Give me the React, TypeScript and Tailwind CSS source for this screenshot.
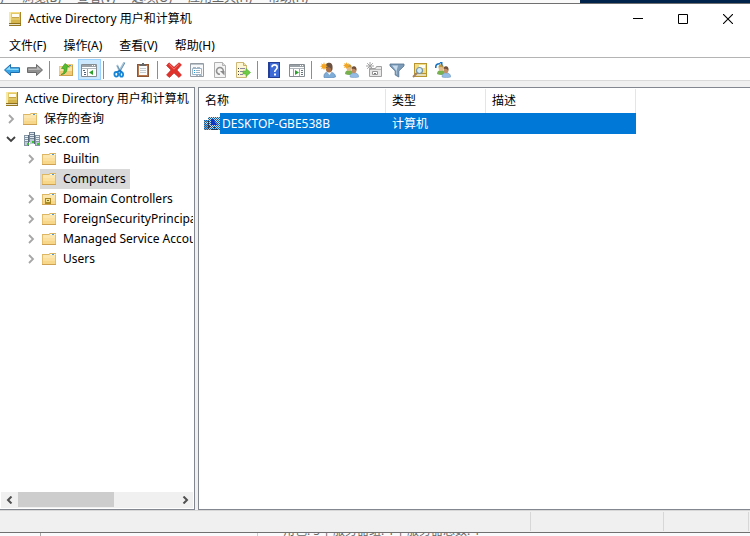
import React, { useState } from 'react';
import clsx from 'clsx';

type IconProps = { className?: string };

function Icon({ className, children }: IconProps & { children: React.ReactNode }) {
  return (
    <svg viewBox="0 0 16 16" aria-hidden="true" className={clsx('h-4 w-4 shrink-0', className)}>
      {children}
    </svg>
  );
}

const ConsoleIcon = ({ className }: IconProps) => (
  <Icon className={className}>
    <path d="M2 1h12v12H2z" fill="#e3c868" />
    <path d="M2 1h2v12H2z" fill="#f6e9a6" />
    <path d="M4 1h9v1H4z" fill="#f3dc85" />
    <path d="M4 9h9v3H4z" fill="#d6b64c" />
    <path d="M13 1h1v14h-1z" fill="#a98526" />
    <path d="M2 12h12v1H2z" fill="#8d6f1c" />
    <path d="M2 13h11v1H2z" fill="#e9e2c4" />
    <path d="M2 14h12v1H2z" fill="#94741d" />
    <path d="M5 3h7v3H5z" fill="#fffdf2" />
    <path d="M5 6h7v1H5z" fill="#c4a54c" />
  </Icon>
);

const FolderIcon = ({ className, badge }: IconProps & { badge?: boolean }) => (
  <Icon className={className}>
    <path d="M1 3h7l1-1h6v12H1z" fill="#f7d78a" />
    <path d="M1 3h7l1-1h6v1H9L8 4H1z" fill="#ddb664" />
    <path d="M2 4h12v3H2z" fill="#fbe6b0" />
    <path d="M2 7h12v3H2z" fill="#fadf9e" />
    <path d="M9 3h5v1H9z" fill="#fff8e2" />
    <path d="M11 3h2v1h-2z" fill="#4d9ad4" />
    <path d="M14 4h1v10h-1zM1 4h1v10H1z" fill="#e3bd6c" />
    <path d="M1 13h14v1H1z" fill="#cfa152" />
    {badge && (
      <>
        <path d="M4 7h6v6H4z" fill="#a98a22" />
        <path d="M5 8h4v3H5z" fill="#f1e08c" />
        <path d="M6 9h2v1H6z" fill="#7a6a30" />
      </>
    )}
  </Icon>
);

const DomainIcon = ({ className }: IconProps) => (
  <Icon className={className}>
    <path d="M5 1h6v10H5z" fill="#76889a" />
    <path d="M0 4h5v11H0zM11 4h5v11h-5z" fill="#8696a4" />
    <path d="M6 2h4v1H6zM6 4h4v1H6zM6 6h4v1H6z" fill="#dfe8ee" />
    <path d="M1 5h3v1H1zM1 7h3v1H1zM1 9h3v1H1zM12 5h3v1h-3zM12 7h3v1h-3zM12 9h3v1h-3z" fill="#e9f0f4" />
    <path d="M1 11h4v3H1zM6 8h4v5H6zM12 11h3v3h-3z" fill="#bccad4" />
    <path d="M4 4h1v11H4zM10 1h1v12h-1z" fill="#56697a" />
    <path d="M3 12h2v2H3zM8 10h2v2H8zM13 12h2v2h-2z" fill="#39c52f" />
  </Icon>
);

// Selected list icons are drawn with a checkered highlight over the glyph
const SelectedComputerIcon = ({ className }: IconProps) => (
  <Icon className={className}>
    <defs>
      <pattern id="dither" width="2" height="2" patternUnits="userSpaceOnUse">
        <path d="M0 0h1v1H0zM1 1h1v1H1z" fill="#0a62b4" shapeRendering="crispEdges" />
      </pattern>
    </defs>
    <path d="M4 1h12v11H4z" fill="#d5d8da" />
    <path d="M0 4h5v10H0z" fill="#8f979e" />
    <path d="M1 6h3v2H1z" fill="#dfe3e6" />
    <path d="M4 12h12v2H4z" fill="#b9c0c6" />
    <path d="M0 4h5v10H0zM4 1h12v13H4z" fill="url(#dither)" />
    <path d="M7 3h3l1 3 3 3H7z" fill="#1236c4" />
    <path d="M5 10h2v1H5zM9 11h3v1H9zM7 13h7v1H7zM4 5h1v8H4z" fill="#263a56" />
  </Icon>
);

const BackIcon = () => (
  <Icon>
    <path d="M.5 8l6-5.500v3.200h9v4.800h-9v3z" fill="#3aa5e6" stroke="#1c6fae" />
    <path d="M2 7.800l4-3.500v2.400h8.500v1.200z" fill="#8fdcfb" />
  </Icon>
);

const ForwardIcon = () => (
  <Icon>
    <path d="M15.500 8l-6-5.500v3.200h-9v4.800h9v3z" fill="#8f8f8f" stroke="#6b6b6b" />
    <path d="M14 7.800l-4-3.500v2.400H1.500v1.200z" fill="#bdbdbd" />
  </Icon>
);

const UpIcon = () => (
  <Icon>
    <path d="M1 4h6l1-2h7v12H1z" fill="#f2cb78" />
    <path d="M2 5h12v4H2z" fill="#fae4a8" />
    <path d="M1 13h14v1H1zM14 3h1v11h-1z" fill="#cda04a" />
    <path d="M11 3h2v1h-2z" fill="#4d9ad4" />
    <path d="M3 12.500c2.600-.5 3.500-3 3-6H3.500L7 1.500 11.500 5H9c.6 4-1.500 7.500-6 7.500z" fill="#55bd2f" stroke="#2f8c1c" strokeWidth=".6" />
  </Icon>
);

const TreePaneIcon = ({ flipped }: { flipped?: boolean }) => (
  <Icon>
    <path d="M.5 2.500h15v12H.5z" fill="#fff" stroke="#858c92" />
    <path d="M1 3h14v2H1z" fill="#9aa2a8" />
    <path d="M11 3h1v1h-1zM13 3h1v1h-1z" fill="#fff" />
    <path d="M1 6h14v1H1z" fill="#aeb6bc" />
    {flipped ? (
      <>
        <path d="M4.500 7v7M10.500 7v7" stroke="#a0a8ae" />
        <path d="M6 8l4 2.500L6 13z" fill="#2ba32b" />
        <path d="M12 8h2v1h-2zM12 10h2v1h-2zM12 12h2v1h-2z" fill="#68747e" />
      </>
    ) : (
      <>
        <path d="M6.500 7v7" stroke="#a0a8ae" />
        <path d="M2 8h2v1H2zM3 10h2v1H3zM3 12h2v1H3z" fill="#526578" />
        <path d="M12 8v5l-4-2.500z" fill="#2ba32b" />
      </>
    )}
  </Icon>
);

const CutIcon = () => (
  <Icon>
    <path d="M12.500 0L7 9.500M5 3l3 7" stroke="#a9c5d8" strokeWidth="2" />
    <path d="M12.800 1L8 9.500M5.500 4l2.500 5" stroke="#5282a6" strokeWidth=".8" />
    <path d="M5 10l3-1.500 2 2" stroke="#1674c4" strokeWidth="1.800" fill="none" />
    <ellipse cx="4.300" cy="12.300" rx="1.900" ry="2.300" fill="none" stroke="#1785d6" strokeWidth="1.800" />
    <ellipse cx="9.500" cy="12.500" rx="1.600" ry="2.200" fill="none" stroke="#1785d6" strokeWidth="1.800" />
  </Icon>
);

const ClipboardIcon = () => (
  <Icon>
    <path d="M2 2h12v13H2z" fill="#8f5636" />
    <path d="M3 3h10v11H3z" fill="#b9774d" />
    <path d="M4 4h8v9H4z" fill="#fcfcfc" />
    <path d="M5 6.500h6M5 8.500h6M5 10.500h6" stroke="#c3cad0" />
    <path d="M5 2h2V1h2v1h2v2H5z" fill="#686868" />
  </Icon>
);

const DeleteIcon = () => (
  <Icon>
    <path d="M3 .8l5 4.500L13 .8l2.500 2L11 8l4.500 5-2.500 2.500L8 11l-4.500 4.500L.5 13l4.500-5L.5 3.500z" fill="#e0322c" stroke="#c4241f" strokeWidth=".6" />
    <path d="M3 2.200l5 5 5-5" stroke="#f77670" fill="none" />
  </Icon>
);

const PropertiesIcon = () => (
  <Icon>
    <path d="M1.500 1.500h13v13h-13z" fill="#f6f8fa" stroke="#949ba2" />
    <path d="M2 2h12v1H2z" fill="#bdc5cc" />
    <path d="M3.500 6.500h9v6h-9z" fill="#fff" stroke="#9bb4c7" />
    <path d="M4 5h3v1H4zM8 5h3v1H8z" fill="#aab7c2" />
    <path d="M5 8h1v1H5zM5 10h1v1H5z" fill="#1a96dc" />
    <path d="M7 8.500h4M7 10.500h4" stroke="#9db1c0" />
    <path d="M7 13h2v1H7zM10 13h3v1h-3z" fill="#abb7c1" />
  </Icon>
);

const RefreshIcon = () => (
  <Icon>
    <path d="M2.500.5h8l3 3v12h-11z" fill="#f5f5f5" stroke="#b0b0b0" />
    <path d="M10.500.5v3h3" fill="#ddd" stroke="#b3b3b3" />
    <path d="M8 12.300a3.400 3.400 0 1 1 3.300-3.300" fill="none" stroke="#929292" strokeWidth="1.600" />
    <path d="M8 9h4.500v4.500z" fill="#8a8a8a" />
  </Icon>
);

const ExportIcon = () => (
  <Icon>
    <path d="M1.500.5h7l3 3v12h-10z" fill="#fdf6d5" stroke="#cdb878" />
    <path d="M8.500.5v3h3" fill="#f3e2a8" stroke="#c6ad68" />
    <path d="M3 6h1v1H3zM3 9h1v1H3zM3 12h1v1H3z" fill="#444" />
    <path d="M5 6.500h5M5 9.500h3M5 12.500h3" stroke="#8c86a0" />
    <path d="M8 9h3V6.500l4.500 4-4.500 4V12H8z" fill="#6ecb45" stroke="#4fae30" strokeWidth=".6" />
  </Icon>
);

const HelpIcon = () => (
  <Icon>
    <path d="M2 0h12v16H2z" fill="#263f92" />
    <path d="M4 1h9v14H4z" fill="#3f6bd6" />
    <path d="M6 5.300c0-3.200 5.200-3.200 5.200 0 0 2.200-2.500 2.200-2.500 4.700" fill="none" stroke="#fff" strokeWidth="1.600" />
    <path d="M8 11.500h2v2H8z" fill="#fff" />
  </Icon>
);

const Spark = () => (
  <path d="M4 0l.8 2.400L7 1.200 5.900 3.300 8 4.200 5.900 5l1 2.200-2.100-1L4 8.300l-.8-2.100-2.200 1L2.100 5 0 4.200l2.100-.9L1 1.200l2.200 1.200z" fill="#f5a623" />
);

const NewUserIcon = () => (
  <Icon>
    <path d="M4 15.500c-.5-4 1.500-5.500 5-5.500s6.500 1.500 6.500 5c-3 1-8 1.500-11.500.5z" fill="#7fadd8" stroke="#527fae" strokeWidth=".6" />
    <path d="M7 10l2.500 3 2-3z" fill="#fff" />
    <ellipse cx="9" cy="6" rx="3.200" ry="4.500" fill="#a9714a" />
    <path d="M5.500 6C5 1 8 .5 9.500.7 12.500 1 13 4 12.300 8l-1 1C11.500 5 9 4.500 5.500 6z" fill="#6b5140" />
    <Spark />
  </Icon>
);

const People = () => (
  <>
    <path d="M2 12c0-3 2-4 4-4s4 1 4 4.500c-3 .8-6 .5-8-.5z" fill="#78b04f" />
    <ellipse cx="6" cy="6" rx="2.400" ry="3" fill="#e0bb8c" />
    <path d="M3.500 5.500C3.500 2.500 5 2 6.500 2.200c2 .3 2.500 2 2 4.300C8 5 6 4.500 3.500 5.500z" fill="#c49a3d" />
    <path d="M7 15c0-3 1.500-4.200 4-4.200s4.700 1.200 4.700 4.200c-3 .8-6 .8-8.700 0z" fill="#95bce4" stroke="#6a95bf" strokeWidth=".5" />
    <ellipse cx="11" cy="8" rx="2.400" ry="3.200" fill="#c28e67" />
    <path d="M8.700 7C8.700 4.500 10 4 11.300 4.200c2 .2 2.400 2 2 4.500C12.500 7 11 6.300 8.700 7z" fill="#70503a" />
  </>
);

const NewGroupIcon = () => (
  <Icon>
    <People />
    <g transform="scale(.85)">
      <Spark />
    </g>
  </Icon>
);

const NewUnitIcon = () => (
  <Icon>
    <path d="M3.500 6.500h6l1-2h5v10h-12z" fill="#e8e8e8" stroke="#a0a0a0" />
    <path d="M4 7h11v1H4z" fill="#b5b5b5" />
    <path d="M6.500 9.500h5v3h-5z" fill="#fff" stroke="#959595" />
    <path d="M8 11h2v1H8z" fill="#777" />
    <path d="M4 0v8M0 4h8M1.200 1.200l5.600 5.600M6.800 1.200L1.200 6.800" stroke="#a2a2a2" />
  </Icon>
);

const FilterIcon = () => (
  <Icon>
    <path d="M1 2h14v2L9.800 9v6L6.200 13V9L1 4z" fill="#7c9cba" stroke="#54728e" strokeWidth=".8" />
    <path d="M3 3.500h6L7.500 9v3.500L7 12V8.500z" fill="#c9dced" />
  </Icon>
);

const FindIcon = () => (
  <Icon>
    <path d="M2 1h13v14H2z" fill="#b8952f" />
    <path d="M3 2h11v9H3z" fill="#f2dc83" />
    <path d="M3 12h11v2H3z" fill="#e5dcb6" />
    <path d="M7 3h6v3H7z" fill="#fffdee" />
    <path d="M1 15l4-4" stroke="#a4825d" strokeWidth="2" />
    <circle cx="7.500" cy="8.500" r="3" fill="#d5eefb" stroke="#7793a6" strokeWidth="1.200" />
  </Icon>
);

const AddToGroupIcon = () => (
  <Icon>
    <People />
    <path d="M.8 6C.5 3 2 1.500 5 1.700" fill="none" stroke="#1774c5" strokeWidth="1.600" />
    <path d="M4.500 0h3v4.500z" fill="#1774c5" />
  </Icon>
);

const toolGroups = [
  [
    { label: '后退', icon: <BackIcon /> },
    { label: '前进', icon: <ForwardIcon /> },
  ],
  [
    { label: '上移一级', icon: <UpIcon /> },
    { label: '显示/隐藏控制台树', icon: <TreePaneIcon />, pressed: true },
  ],
  [
    { label: '剪切', icon: <CutIcon /> },
    { label: '粘贴', icon: <ClipboardIcon /> },
  ],
  [
    { label: '删除', icon: <DeleteIcon /> },
    { label: '属性', icon: <PropertiesIcon /> },
    { label: '刷新', icon: <RefreshIcon /> },
    { label: '导出列表', icon: <ExportIcon /> },
  ],
  [
    { label: '帮助', icon: <HelpIcon /> },
    { label: '显示/隐藏操作窗格', icon: <TreePaneIcon flipped /> },
  ],
  [
    { label: '新建用户', icon: <NewUserIcon /> },
    { label: '新建组', icon: <NewGroupIcon /> },
    { label: '新建组织单位', icon: <NewUnitIcon /> },
    { label: '筛选器', icon: <FilterIcon /> },
    { label: '查找', icon: <FindIcon /> },
    { label: '添加到组', icon: <AddToGroupIcon /> },
  ],
];

const menus = ['文件(F)', '操作(A)', '查看(V)', '帮助(H)'];

const containers = [
  { name: 'Builtin', expandable: true },
  { name: 'Computers', expandable: false },
  { name: 'Domain Controllers', expandable: true, badge: true },
  { name: 'ForeignSecurityPrincipals', expandable: true },
  { name: 'Managed Service Accounts', expandable: true },
  { name: 'Users', expandable: true },
];

function Chevron({ open }: { open?: boolean }) {
  return (
    <svg viewBox="0 0 10 10" aria-hidden="true" className="h-2.5 w-2.5 shrink-0">
      <path
        d={open ? 'M1 3l4 4 4-4' : 'M3 1l4 4-4 4'}
        fill="none"
        stroke={open ? '#404040' : '#a6a6a6'}
        strokeWidth="1.800"
      />
    </svg>
  );
}

function Toolbar() {
  return (
    <div role="toolbar" className="flex h-6 items-end border-t border-b border-t-[#b4b4b4] border-b-[#dadada] bg-white pl-px">
      {toolGroups.map((group, i) => (
        <div key={i} className="flex items-center">
          {i > 0 && <div className="ml-0.5 mr-[5px] h-[18px] w-px bg-[#8d8d8d]" />}
          {group.map(tool => (
            <button
              key={tool.label}
              type="button"
              aria-label={tool.label}
              className={clsx(
                'flex h-[21px] w-[23px] items-center border pt-px pl-0.5 hover:bg-[#e5f3ff]',
                tool.pressed ? 'border-[#99d1ff] bg-[#cce8ff]' : 'border-transparent'
              )}
            >
              {tool.icon}
            </button>
          ))}
        </div>
      ))}
    </div>
  );
}

function TreePane() {
  const [selected, setSelected] = useState('Computers');

  return (
    <nav className="flex w-[195px] shrink-0 flex-col border-t border-r border-b border-[#828790] bg-white pt-px">
      <ul className="mr-px flex-1 overflow-hidden whitespace-nowrap leading-5">
        <li className="flex h-5 items-center gap-[5px] pl-1">
          <ConsoleIcon />
          <button type="button">Active Directory 用户和计算机</button>
        </li>
        <li className="flex h-5 items-center pl-1.5">
          <Chevron />
          <FolderIcon className="ml-1.5" />
          <button type="button" className="ml-1.5">保存的查询</button>
        </li>
        <li className="flex h-5 items-center pl-1.5">
          <Chevron open />
          <DomainIcon className="ml-2" />
          <button type="button" className="ml-1">sec.com</button>
        </li>
        {containers.map(item => (
          <li key={item.name} className="flex h-5 items-center pl-[26px]">
            <span className="w-3.5 shrink-0">{item.expandable && <Chevron />}</span>
            <button
              type="button"
              onClick={() => setSelected(item.name)}
              className={clsx('flex h-5 shrink-0 items-center gap-1.5 pl-px pr-1', selected === item.name && 'bg-[#d9d9d9]')}
            >
              <FolderIcon badge={item.badge} />
              {item.name}
            </button>
          </li>
        ))}
      </ul>
      <div className="mx-px mb-px flex h-4 bg-[#f0f0f0]">
        <button type="button" aria-label="向左滚动" className="flex w-[17px] items-center justify-center">
          <svg viewBox="0 0 8 8" className="h-2 w-2">
            <path d="M5.500 .5L2 4l3.500 3.500" fill="none" stroke="#505050" strokeWidth="2" />
          </svg>
        </button>
        <div className="flex-1">
          <div className="h-[15px] w-[61%] bg-[#cdcdcd]" />
        </div>
        <button type="button" aria-label="向右滚动" className="flex w-[17px] items-center justify-center">
          <svg viewBox="0 0 8 8" className="h-2 w-2">
            <path d="M2.500 .5L6 4 2.500 7.500" fill="none" stroke="#505050" strokeWidth="2" />
          </svg>
        </button>
      </div>
    </nav>
  );
}

function ListPane() {
  return (
    <main className="flex-1 border-t border-b border-l border-[#828790] bg-white pt-px">
      <table className="w-[437px] table-fixed border-separate border-spacing-0 text-left">
        <thead>
          <tr className="h-6">
            <th className="w-[187px] border-r border-[#e5e5e5] py-0 pr-0 pl-1.5 font-normal">名称</th>
            <th className="w-[100px] border-r border-[#e5e5e5] py-0 pr-0 pl-1.5 font-normal">类型</th>
            <th className="border-r border-[#e5e5e5] py-0 pr-0 pl-1.5 font-normal">描述</th>
          </tr>
        </thead>
        <tbody>
          <tr className="h-[21px] text-white">
            <td className="p-0">
              <div className="flex h-[21px] items-center pl-[5px]">
                <SelectedComputerIcon />
                <span className="flex-1 bg-[#0078d7] pl-0.5 leading-[21px]">DESKTOP-GBE538B</span>
              </div>
            </td>
            <td className="bg-[#0078d7] py-0 pr-0 pl-1.5">计算机</td>
            <td className="bg-[#0078d7] p-0" />
          </tr>
        </tbody>
      </table>
    </main>
  );
}

function App() {
  return (
    <div className="flex min-h-screen flex-col bg-[#f0f0f0] font-['Noto_Sans','Noto_Sans_CJK_SC',sans-serif] text-xs text-black">
      <div className="flex h-[3px] overflow-hidden bg-[#f9f9f9] text-[#666]">
        <div className="-mt-2.5 flex flex-1 gap-4 whitespace-nowrap leading-4">
          <span className="w-1.5">)</span>
          <span>浏览(B)</span>
          <span>查看(V)</span>
          <span>选项(O)</span>
          <span>应用工具(H)</span>
          <span>帮助(H)</span>
        </div>
        <div className="w-[170px] bg-[#00234b]" />
      </div>

      <header className="border-t border-[#707070] bg-white">
        <div className="flex h-7 items-center pt-0.5 pl-[7px]">
          <ConsoleIcon />
          <h1 className="ml-[5px] flex-1">Active Directory 用户和计算机</h1>
          <button type="button" aria-label="最小化" className="flex h-6 w-[45px] items-center justify-center">
            <svg viewBox="0 0 10 10" className="h-2.5 w-2.5">
              <path d="M0 4h10v1H0z" />
            </svg>
          </button>
          <button type="button" aria-label="最大化" className="flex h-6 w-[45px] items-center justify-center">
            <svg viewBox="0 0 10 10" className="h-2.5 w-2.5">
              <path d="M.5 .5h9v9h-9z" fill="none" stroke="#000" />
            </svg>
          </button>
          <button type="button" aria-label="关闭" className="flex h-6 w-[45px] items-center justify-center">
            <svg viewBox="0 0 10 10" className="h-2.5 w-2.5">
              <path d="M0 0l10 10M10 0L0 10" stroke="#000" strokeWidth="1.100" />
            </svg>
          </button>
        </div>
        <nav className="flex h-[25px] items-center gap-[17px] pt-0.5 pl-[9px]">
          {menus.map(menu => (
            <button key={menu} type="button">
              {menu}
            </button>
          ))}
        </nav>
        <Toolbar />
      </header>

      <div className="flex flex-1 gap-[3px] pt-1.5">
        <TreePane />
        <ListPane />
      </div>

      <footer className="flex h-[23px] justify-end border-t border-b border-t-[#d7d7d7] border-b-[#707070] py-px pr-px">
        <div className="w-[133px] border-l border-[#d7d7d7]" />
        <div className="w-[86px] border-x border-[#d7d7d7]" />
      </footer>
      <div className="flex h-[3px] overflow-hidden bg-[#faf9fb] text-[#666]">
        <div className="w-[41px] border-r border-[#aaa]" />
        <div className="w-[217px] border-r border-[#ccc]" />
        <p className="-mt-2.5 whitespace-nowrap pl-[25px] leading-4">角色: 5 | 服务器组: 1 | 服务器总数: 1</p>
      </div>
    </div>
  );
}

export default App;
